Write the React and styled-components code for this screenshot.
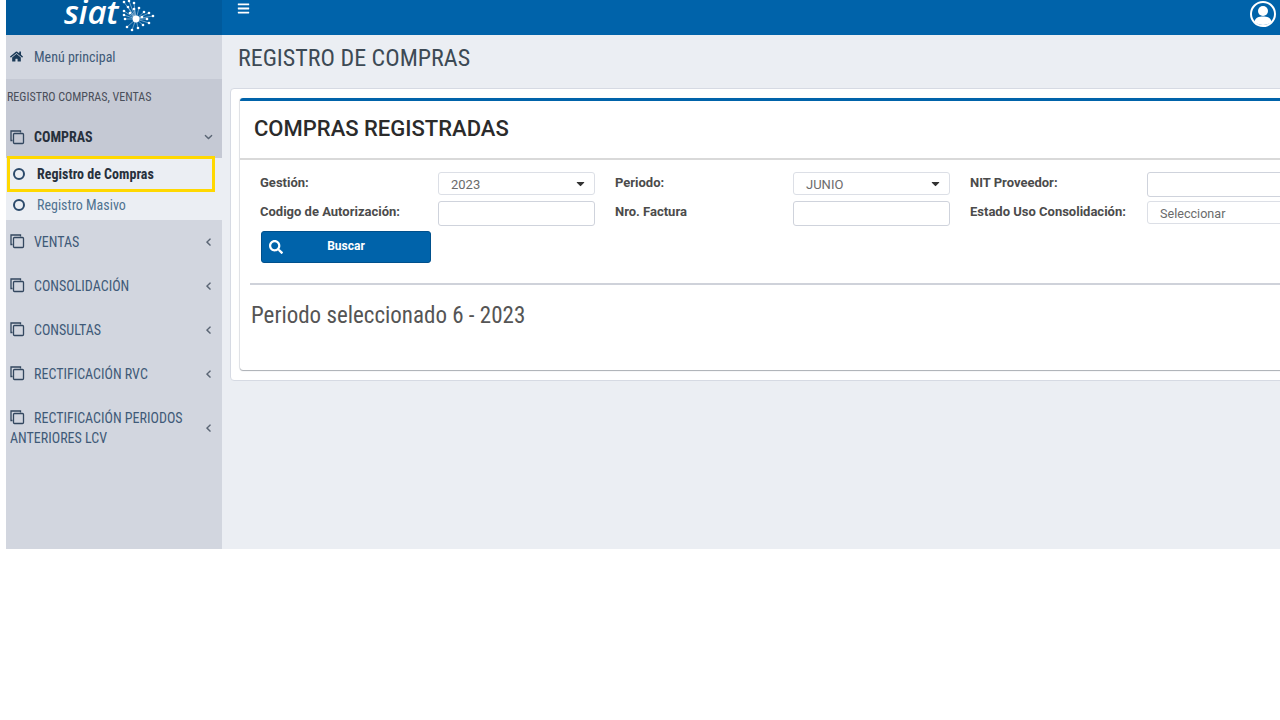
import { FaBars, FaCaretDown, FaChevronDown, FaChevronLeft, FaHome, FaSearch } from "react-icons/fa";
import styled, { createGlobalStyle } from "styled-components";

const GlobalStyle = createGlobalStyle`
	html, body {
		margin: 0;
		background: #fff;
		overflow: hidden;
	}
	body {
		font-family: Roboto, "Liberation Sans", sans-serif;
	}
`;

const Shell = styled.div`
	width: 1274px;
	height: 549px;
	margin-left: 6px;
	display: flex;
	flex-direction: column;
	overflow: hidden;
	background: #ebeef3;
`;

const TopBar = styled.header`
	height: 35px;
	flex: none;
	display: flex;
	align-items: flex-start;
	background: #0063aa;
	color: #fff;
`;

const LogoBox = styled.div`
	width: 216px;
	height: 35px;
	display: flex;
	gap: 3px;
	padding-left: 58px;
	box-sizing: border-box;
	background: #005a9c;
`;

const LogoText = styled.span`
	font-family: "Open Sans", sans-serif;
	font-size: 33px;
	font-style: italic;
	font-weight: 600;
	line-height: 24px;
	letter-spacing: -0.3px;
`;

const MenuToggle = styled.button`
	border: 0;
	padding: 2px 0 0 15px;
	background: none;
	color: #fff;
	font-size: 13px;
	line-height: 12px;
`;

const UserSlot = styled.div`
	margin-left: auto;
	padding-right: 3px;
	line-height: 0;
`;

const Body = styled.div`
	flex: 1;
	display: flex;
	min-height: 0;
`;

const Sidebar = styled.nav`
	width: 216px;
	flex: none;
	background: #d2d6df;
	color: #3b5570;
	font-size: 14px;
	font-stretch: 87%;
`;

const HomeRow = styled.div`
	height: 44px;
	box-sizing: border-box;
	padding: 0 0 1px 4px;
	display: flex;
	align-items: center;
	gap: 11px;
	color: #3f5a78;
	svg {
		color: #1b3a57;
		font-size: 13px;
	}
`;

const ActiveGroup = styled.div`
	background: #c5c9d4;
`;

const SectionLabel = styled.div`
	height: 37px;
	box-sizing: border-box;
	padding: 0 0 2px 1px;
	display: flex;
	align-items: center;
	font-size: 12px;
	font-stretch: 85%;
	color: #4a4f5a;
	white-space: nowrap;
`;

const MenuRow = styled.div`
	position: relative;
	height: ${(p) => (p.$tall ? "64px" : p.$open ? "42px" : "44px")};
	display: flex;
	align-items: center;
	padding: 0 36px 0 4px;
	box-sizing: border-box;
	font-weight: ${(p) => (p.$open ? 700 : 400)};
	color: ${(p) => (p.$open ? "#27303c" : "#3f5a78")};
	line-height: 20px;
`;

const MenuLabel = styled.span`
	display: block;
	width: 190px;
`;

const Caret = styled.span`
	position: absolute;
	right: 9px;
	top: 50%;
	transform: translateY(-40%);
	color: #5b6675;
	font-size: 9px;
	line-height: 9px;
`;

const CloneSvg = styled.svg`
	width: 15px;
	height: 15px;
	margin-right: 9px;
	vertical-align: -2px;
	fill: none;
	stroke: #33475f;
	stroke-width: 1.3;
`;

const SubMenu = styled.div`
	height: 62px;
	display: flex;
	flex-direction: column;
	background: #ebeef3;
`;

const SubItem = styled.div`
	height: 30px;
	display: flex;
	align-items: center;
	gap: 12px;
	padding-left: 7px;
	box-sizing: border-box;
	color: #4f7290;
`;

const HighlightBox = styled.div`
	width: 208px;
	height: 36px;
	flex: none;
	margin: -2px 0 -2px 1px;
	box-sizing: border-box;
	border: 3px solid #ffd800;
	display: flex;
	align-items: center;
	gap: 12px;
	padding-left: 3px;
	font-weight: 700;
	color: #27303c;
`;

const Ring = styled.span`
	width: 8px;
	height: 8px;
	border: 2px solid #2c4a6b;
	border-radius: 50%;
	flex: none;
`;

const Main = styled.main`
	flex: 1;
	min-width: 0;
	overflow: hidden;
`;

const PageTitle = styled.h1`
	height: 53px;
	box-sizing: border-box;
	margin: 0;
	padding: 0 0 8px 16px;
	display: flex;
	align-items: center;
	font-size: 24px;
	font-stretch: 87%;
	font-weight: 400;
	color: #3d4a55;
	white-space: nowrap;
`;

const OuterCard = styled.section`
	width: 1100px;
	height: 293px;
	margin-left: 8px;
	box-sizing: border-box;
	padding: 9px 0 0 9px;
	background: #fff;
	border: 1px solid #d6dae3;
	border-radius: 4px;
`;

const InnerCard = styled.div`
	height: 272px;
	box-sizing: border-box;
	border-top: 3px solid #0063aa;
	border-radius: 3px;
	box-shadow: 0 1px 1px #a9adb3, -1px 0 1px #e4e6ea;
`;

const CardHeader = styled.div`
	height: 59px;
	box-sizing: border-box;
	padding: 0 0 3px 14px;
	display: flex;
	align-items: center;
	border-bottom: 2px solid #d9d9d9;
	font-size: 22px;
	font-weight: 500;
	color: #2b2b2b;
`;

const FilterGrid = styled.div`
	display: grid;
	grid-template-columns: repeat(3, 355px);
	row-gap: 4px;
	padding: 12px 0 0 20px;
`;

const Field = styled.div`
	display: grid;
	grid-template-columns: ${(p) => (p.$last ? "177px" : "178px")} 157px;
	align-items: start;
`;

const FieldLabel = styled.label`
	font-size: 13px;
	font-weight: 700;
	line-height: 22px;
	color: #4b4b4b;
	white-space: nowrap;
`;

const SelectBox = styled.div`
	height: 23px;
	box-sizing: border-box;
	display: flex;
	align-items: center;
	justify-content: space-between;
	padding: 1px 7px 0 12px;
	background: #fff;
	border: 1px solid #dcdfe6;
	border-radius: 3px;
	font-size: ${(p) => (p.$placeholder ? "12.6px" : "13px")};
	color: #6b6b6b;
	svg {
		color: #333;
		margin-top: -2px;
	}
`;

const TextBox = styled.div`
	height: 25px;
	box-sizing: border-box;
	background: #fff;
	border: 1px solid #cfd3dc;
	border-radius: 3px;
`;

const SearchButton = styled.button`
	position: relative;
	display: block;
	width: 170px;
	height: 32px;
	margin: 5px 0 0 21px;
	border: 1px solid #00508c;
	border-radius: 3px;
	background: #0063aa;
	color: #fff;
	font-family: inherit;
	font-size: 12px;
	font-weight: 700;
	padding-bottom: 3px;
	svg {
		position: absolute;
		left: 7px;
		top: 8px;
		font-size: 14px;
	}
`;

const Divider = styled.hr`
	margin: 20px 0 0 10px;
	border: 0;
	border-top: 2px solid #cfd2da;
`;

const PeriodText = styled.div`
	padding: 16px 0 0 11px;
	font-size: 23px;
	font-stretch: 87%;
	line-height: 30px;
	color: #555;
`;

function CloneIcon() {
	return (
		<CloneSvg viewBox="0 0 15 15">
			<path d="M2.5 10.5 H1 V1 H10.5 V2.5" />
			<rect x="3.5" y="3.5" width="10" height="10" rx="1" />
		</CloneSvg>
	);
}

function UserIcon() {
	return (
		<svg width="28" height="28" viewBox="0 0 28 28">
			<circle cx="14" cy="14" r="12" fill="none" stroke="#fff" strokeWidth="2" />
			<circle cx="14" cy="11" r="5" fill="#fff" />
			<path d="M5.5 22 C6 17.5 10 16.5 14 16.5 C18 16.5 22 17.5 22.5 22 C18 26 10 26 5.5 22 Z" fill="#fff" />
		</svg>
	);
}

function LogoMark() {
	const nodes = [
		[3, 2], [8, 1], [13, 3], [7, 7], [18, 8], [23, 12], [28, 13], [32, 16], [26, 19], [21, 17],
		[9, 13], [3, 11], [4, 19], [6, 27], [11, 30], [17, 28], [22, 25], [28, 23], [13, 9], [3, 15],
	];
	return (
		<svg width="34" height="32" viewBox="0 0 34 32">
			<g stroke="#cfe0ee" strokeWidth="0.7" fill="none" opacity="0.75">
				{nodes.map(([x, y]) => (
					<line key={`${x}-${y}`} x1="15" y1="19" x2={x} y2={y} />
				))}
			</g>
			<g fill="#fff">
				{nodes.map(([x, y]) => (
					<circle key={`${x}-${y}`} cx={x} cy={y} r="1.3" />
				))}
				<circle cx="15" cy="19" r="3.4" />
			</g>
		</svg>
	);
}

const menu = [
	{ label: "VENTAS" },
	{ label: "CONSOLIDACIÓN" },
	{ label: "CONSULTAS" },
	{ label: "RECTIFICACIÓN RVC" },
	{ label: "RECTIFICACIÓN PERIODOS ANTERIORES LCV", tall: true },
];

export default function App() {
	return (
		<>
			<GlobalStyle />
			<Shell>
				<TopBar>
					<LogoBox>
						<LogoText>siat</LogoText>
						<LogoMark />
					</LogoBox>
					<MenuToggle aria-label="menu">
						<FaBars />
					</MenuToggle>
					<UserSlot>
						<UserIcon />
					</UserSlot>
				</TopBar>
				<Body>
					<Sidebar>
						<HomeRow>
							<FaHome />
							Menú principal
						</HomeRow>
						<ActiveGroup>
							<SectionLabel>REGISTRO COMPRAS, VENTAS</SectionLabel>
							<MenuRow $open>
								<CloneIcon />
								COMPRAS
								<Caret>
									<FaChevronDown />
								</Caret>
							</MenuRow>
						</ActiveGroup>
						<SubMenu>
							<HighlightBox>
								<Ring />
								Registro de Compras
							</HighlightBox>
							<SubItem>
								<Ring />
								Registro Masivo
							</SubItem>
						</SubMenu>
						{menu.map((item) => (
							<MenuRow key={item.label} $tall={item.tall}>
								<MenuLabel>
									<CloneIcon />
									{item.label}
								</MenuLabel>
								<Caret>
									<FaChevronLeft />
								</Caret>
							</MenuRow>
						))}
					</Sidebar>
					<Main>
						<PageTitle>REGISTRO DE COMPRAS</PageTitle>
						<OuterCard>
							<InnerCard>
								<CardHeader>COMPRAS REGISTRADAS</CardHeader>
								<FilterGrid>
									<Field>
										<FieldLabel>Gestión:</FieldLabel>
										<SelectBox>
											2023
											<FaCaretDown />
										</SelectBox>
									</Field>
									<Field>
										<FieldLabel>Periodo:</FieldLabel>
										<SelectBox>
											JUNIO
											<FaCaretDown />
										</SelectBox>
									</Field>
									<Field $last>
										<FieldLabel>NIT Proveedor:</FieldLabel>
										<TextBox />
									</Field>
									<Field>
										<FieldLabel>Codigo de Autorización:</FieldLabel>
										<TextBox />
									</Field>
									<Field>
										<FieldLabel>Nro. Factura</FieldLabel>
										<TextBox />
									</Field>
									<Field $last>
										<FieldLabel>Estado Uso Consolidación:</FieldLabel>
										<SelectBox $placeholder>Seleccionar</SelectBox>
									</Field>
								</FilterGrid>
								<SearchButton>
									<FaSearch />
									Buscar
								</SearchButton>
								<Divider />
								<PeriodText>Periodo seleccionado 6 - 2023</PeriodText>
							</InnerCard>
						</OuterCard>
					</Main>
				</Body>
			</Shell>
		</>
	);
}
